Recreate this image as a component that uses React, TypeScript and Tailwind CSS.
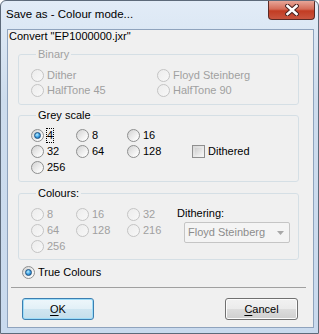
import clsx from "clsx";

type RadioProps = { checked?: boolean; disabled?: boolean };

function Radio({ checked, disabled }: RadioProps) {
  return (
    <span
      className={clsx(
        "w-[13px] h-[13px] rounded-full border flex items-center justify-center shrink-0",
        disabled
          ? "border-[#c4c4c4] bg-[linear-gradient(135deg,#ececec,#f8f8f8)]"
          : "border-[#8e8f8f] bg-[linear-gradient(135deg,#d2d2d2,#f6f6f6_70%,#ffffff)]"
      )}
    >
      {checked && (
        <span className="w-[7px] h-[7px] rounded-full border border-[#1c5180] bg-[radial-gradient(circle_at_40%_35%,#bdf0ff,#3fa3e6_50%,#1b5fa8)]" />
      )}
    </span>
  );
}

type OptionProps = { label: string; checked?: boolean; disabled?: boolean; focus?: boolean };

function Option({ label, checked, disabled, focus }: OptionProps) {
  return (
    <div className="flex items-center h-full">
      <Radio checked={checked} disabled={disabled} />
      <span
        className={clsx(
          "ml-[2px] border leading-[13px]",
          focus ? "border-dotted border-black" : "border-transparent",
          disabled ? "text-[#a0a0a0]" : "text-black"
        )}
      >
        {label}
      </span>
    </div>
  );
}

export default function App() {
  return (
    <div className="w-[319px] h-[334px] border border-[#5d6a7a] rounded-t-[6px] flex flex-col bg-[linear-gradient(#e2ecf7,#cddced_30%,#c9daee)] font-['Liberation_Sans',Arial,sans-serif] text-[11px] text-black overflow-hidden">
      {/* title bar */}
      <div className="h-[28px] flex justify-between shrink-0">
        <div className="pl-[5px] pt-[6px] text-[11.5px] leading-[14px]">Save as - Colour mode...</div>
        <div className="w-[47px] h-[19px] mr-[3px] rounded-b-[4px] border border-t-0 border-[#5b2a25] bg-[linear-gradient(#e7a698,#d46c58_45%,#c23c23_55%,#c9553f)] flex items-center justify-center">
          <svg width="14" height="12" viewBox="0 0 14 12">
            <path d="M2.5 2 L11.5 10 M11.5 2 L2.5 10" stroke="#4a2220" strokeWidth="4.6" strokeLinecap="square" />
            <path d="M2.5 2 L11.5 10 M11.5 2 L2.5 10" stroke="#ffffff" strokeWidth="2.6" strokeLinecap="square" />
          </svg>
        </div>
      </div>

      {/* client */}
      <div className="ml-[6px] mr-[4px] h-[299px] shrink-0 border border-[#8fa3bd] bg-[#f0f0f0] flex flex-col">
        <div className="pl-[1px] leading-[13px] h-[13px]">Convert "EP1000000.jxr"</div>

        <fieldset className="ml-[10px] mt-[4px] w-[281px] border border-[#d5dfe5] rounded-[3px] pl-[12px] pt-[7px] pb-[6px]">
          <legend className="ml-[5px] px-[2px] leading-[14px] text-[#a0a0a0]">Binary</legend>
          <div className="grid grid-cols-[126px_1fr] auto-rows-[15px]">
            <Option label="Dither" disabled />
            <Option label="Floyd Steinberg" disabled />
            <Option label="HalfTone 45" disabled />
            <Option label="HalfTone 90" disabled />
          </div>
        </fieldset>

        <fieldset className="ml-[10px] mt-[3px] w-[281px] border border-[#d5dfe5] rounded-[3px] pl-[12px] pt-[5px] pb-[6px]">
          <legend className="ml-[5px] px-[2px] leading-[14px]">Grey scale</legend>
          <div className="grid grid-cols-[45px_51px_65px_1fr] auto-rows-[16px]">
            <Option label="4" checked focus />
            <Option label="8" />
            <Option label="16" />
            <div />
            <Option label="32" />
            <Option label="64" />
            <Option label="128" />
            <div className="flex items-center">
              <span className="w-[13px] h-[13px] border border-[#8f8f8f] bg-[linear-gradient(135deg,#d8d8d8,#f7f7f7)] p-[2px] shrink-0">
                <span className="block w-full h-full bg-[linear-gradient(135deg,#cfcfcf,#f2f2f2)]" />
              </span>
              <span className="ml-[3px] leading-[13px]">Dithered</span>
            </div>
            <Option label="256" />
          </div>
        </fieldset>

        <fieldset className="ml-[10px] mt-[4px] w-[281px] border border-[#d5dfe5] rounded-[3px] pl-[12px] pt-[6px] pb-[5px]">
          <legend className="ml-[5px] px-[2px] leading-[14px]">Colours:</legend>
          <div className="flex">
            <div className="grid grid-cols-[45px_51px_50px] auto-rows-[16px]">
              <Option label="8" disabled />
              <Option label="16" disabled />
              <Option label="32" disabled />
              <Option label="64" disabled />
              <Option label="128" disabled />
              <Option label="216" disabled />
              <Option label="256" disabled />
            </div>
            <div className="flex flex-col">
              <div className="leading-[14px]">Dithering:</div>
              <div className="ml-[7px] mt-[2px] w-[106px] h-[21px] border border-[#c5c5c5] rounded-[2px] bg-[#f4f4f4] flex items-center justify-between pl-[3px] pr-[5px]">
                <span className="text-[#8c8c8c]">Floyd Steinberg</span>
                <svg width="7" height="4" viewBox="0 0 7 4">
                  <path d="M0 0 H7 L3.5 4 Z" fill="#a8a8a8" />
                </svg>
              </div>
            </div>
          </div>
        </fieldset>

        <div className="ml-[14px] mt-[4px] h-[16px]">
          <Option label="True Colours" checked />
        </div>

        <div className="ml-[3px] mt-[7px] w-[295px] h-px bg-[#a0a0a0]" />

        <div className="mt-[10px] pl-[14px] pr-[15px] flex justify-between">
          <button className="w-[72px] h-[22px] rounded-[3px] border border-[#3c7fb1] shadow-[inset_0_0_0_1px_#9cdcf8] bg-[linear-gradient(#eef7fb,#e2f0f7_50%,#d0e6f1_50%,#c4deeb)] leading-[14px]">
            <span className="underline underline-offset-2">O</span>K
          </button>
          <button className="w-[73px] h-[22px] rounded-[3px] border border-[#707070] shadow-[inset_0_0_0_1px_#fcfcfc] bg-[linear-gradient(#f2f2f2,#ebebeb_50%,#dddddd_50%,#cfcfcf)] leading-[14px]">
            <span className="underline underline-offset-2">C</span>ancel
          </button>
        </div>
      </div>
    </div>
  );
}
